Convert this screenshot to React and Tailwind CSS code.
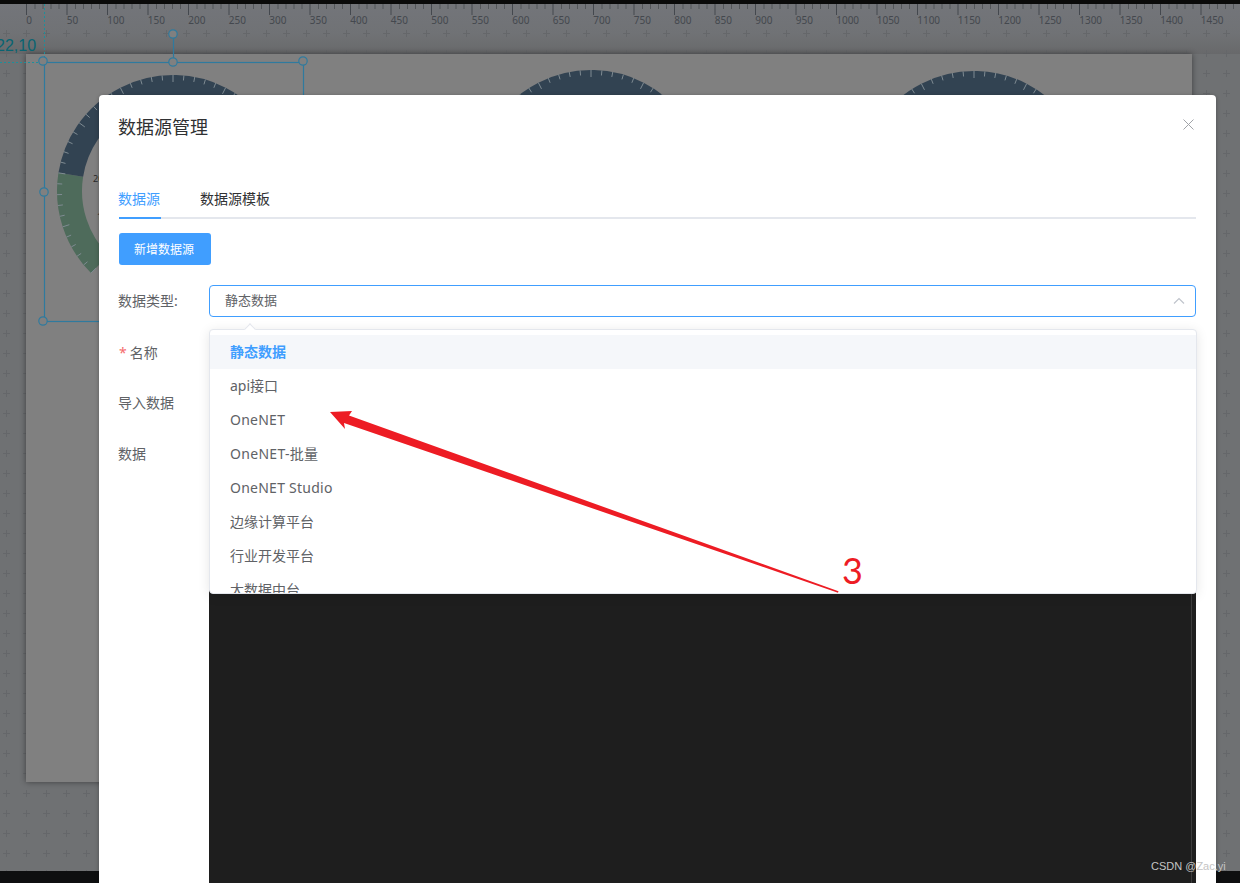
const FONT = { fontFamily: '"Noto Sans", "Noto Sans CJK SC", sans-serif' };

function polar(cx, cy, r, deg) {
  const a = (deg * Math.PI) / 180;
  return [cx + r * Math.cos(a), cy - r * Math.sin(a)];
}

function arc(cx, cy, r, from, to) {
  const [x1, y1] = polar(cx, cy, r, from);
  const [x2, y2] = polar(cx, cy, r, to);
  const large = Math.abs(from - to) > 180 ? 1 : 0;
  return `M${x1} ${y1}A${r} ${r} 0 ${large} 1 ${x2} ${y2}`;
}

function Gauge({ cx, cy }) {
  const ticks = [];
  for (let d = 225; d >= -45; d -= 5.4) ticks.push(d);
  return (
    <g fill="none">
      <path d={arc(cx, cy, 103.5, 225, 171)} stroke="#4e6b5b" strokeWidth="25" />
      <path d={arc(cx, cy, 103.5, 171, -45)} stroke="#324352" strokeWidth="25" />
      {ticks.map((d, i) => {
        const [x1, y1] = polar(cx, cy, 116, d);
        const [x2, y2] = polar(cx, cy, i % 5 === 0 ? 109 : 111, d);
        return <line key={i} x1={x1} y1={y1} x2={x2} y2={y2} stroke="#7f8b92" strokeWidth="1" />;
      })}
    </g>
  );
}

function Ruler() {
  const ticks = [];
  for (let i = 0; i <= 150; i++) {
    const x = Math.round((26.7 + i * 8.1) * 2) / 2;
    const major = i % 5 === 0;
    ticks.push(
      <line key={i} x1={x} y1="4" x2={x} y2={major ? 15 : 9} stroke={major ? "#44484e" : "#53565a"} strokeWidth="1" />
    );
    if (major && i < 150) {
      ticks.push(
        <text key={"t" + i} x={x - 0.3} y="24" fontSize="10" fill="#44484e" style={{ fontFamily: '"Noto Sans", sans-serif' }}>
          {i * 10}
        </text>
      );
    }
  }
  return <g>{ticks}</g>;
}

function Canvas() {
  const handle = "#2f7a9e";
  const circles = [
    [43, 61],
    [173, 62],
    [303, 61],
    [173, 34],
    [44, 192],
    [43, 321],
  ];
  return (
    <div className="absolute inset-0 overflow-hidden bg-[#6f7173]">
      <svg className="absolute left-0 top-0" width="1240" height="883">
        <defs>
          <pattern id="plus" x="-4" y="3" width="20" height="20" patternUnits="userSpaceOnUse">
            <path d="M7 10.5H14M10.5 7V14" stroke="#65676a" strokeWidth="1" />
          </pattern>
          <linearGradient id="top" x1="0" y1="0" x2="0" y2="1">
            <stop offset="0" stopColor="#73757a" />
            <stop offset="0.6" stopColor="#707275" />
            <stop offset="1" stopColor="#68696b" />
          </linearGradient>
        </defs>
        <rect x="0" y="4" width="1240" height="50" fill="url(#top)" />
        <rect x="0" y="30" width="1240" height="841" fill="url(#plus)" />
        <Ruler />
      </svg>
      <div className="absolute left-[26px] top-[54px] h-[728px] w-[1166px] bg-[#808080] shadow-[0_0_6px_rgba(0,0,0,0.45)]" />
      <svg className="absolute left-0 top-0" width="1240" height="883">
        <Gauge cx={173} cy={191} />
        <Gauge cx={591} cy={186} />
        <Gauge cx={974} cy={187} />
        <text x="93" y="182" fontSize="9" fill="#2a2a2a" style={{ fontFamily: '"Noto Sans", sans-serif' }}>20</text>
        <text x="97" y="220" fontSize="9" fill="#2a2a2a" style={{ fontFamily: '"Noto Sans", sans-serif' }}>10</text>
        <path d="M0 62.5H44M44.5 4V62" stroke="#1f8f9a" strokeWidth="1" strokeDasharray="2 2" fill="none" />
        <rect x="44.5" y="62.5" width="259" height="259" fill="none" stroke={handle} strokeWidth="1.2" />
        <line x1="173.5" y1="34" x2="173.5" y2="62" stroke={handle} strokeWidth="1.2" />
        {circles.map(([x, y], i) => (
          <circle key={i} cx={x} cy={y} r="4.2" fill="#808080" stroke={handle} strokeWidth="1.2" />
        ))}
        <text x="-4" y="51" fontSize="16" fill="#086472" style={{ fontFamily: '"Liberation Sans", sans-serif' }}>22,10</text>
      </svg>
    </div>
  );
}

const OPTIONS = [
  ["api接口", ""],
  ["OneNET", "tracking-[0.25px]"],
  ["OneNET-批量", "tracking-[0.3px]"],
  ["OneNET Studio", "tracking-[0.25px]"],
  ["边缘计算平台", ""],
  ["行业开发平台", ""],
  ["大数据中台", ""],
];

function Dropdown() {
  return (
    <div className="absolute left-[110px] top-[110px] z-10 w-[988px] rounded border border-[#e4e7ed] bg-white shadow-[0_2px_12px_rgba(0,0,0,0.1)]">
      <div className="absolute left-[36px] top-[-5px] h-2 w-2 rotate-45 border-l border-t border-[#e4e7ed] bg-white" />
      <div className="h-[263px] overflow-hidden rounded pt-[5px]">
        <div className="flex h-[34px] items-center bg-[#f5f7fa] px-5 text-sm font-bold text-[#409eff]">静态数据</div>
        {OPTIONS.map(([o, extra]) => (
          <div key={o} className={"flex h-[34px] shrink-0 items-center px-5 text-sm text-[#606266] " + extra}>
            {o}
          </div>
        ))}
      </div>
    </div>
  );
}

function Dialog() {
  return (
    <div
      className="absolute left-[99px] top-[95px] flex h-[788px] w-[1117px] flex-col overflow-hidden rounded-t-sm bg-white shadow-[0_1px_4px_rgba(0,0,0,0.3)]"
      style={FONT}
    >
      <div className="relative h-[88px] shrink-0 px-5 pt-[17px]">
        <div className="-ml-px text-lg leading-[30px] text-[#303133]">数据源管理</div>
        <svg className="absolute right-[22px] top-[24px]" width="11" height="11" viewBox="0 0 11 11">
          <path d="M0.5 0.5L10.5 10.5M10.5 0.5L0.5 10.5" stroke="#a0a3a8" strokeWidth="1" fill="none" />
        </svg>
      </div>
      <div className="mx-5 flex h-9 shrink-0 border-b-2 border-[#e4e7ed] text-sm leading-8 text-[#303133]">
        <div className="mb-[-2px] w-[42px] border-b-2 border-[#409eff] text-[#409eff]">
          <span className="-ml-px">数据源</span>
        </div>
        <div className="ml-[39px]">数据源模板</div>
      </div>
      <div className="relative flex flex-1 flex-col px-5 pt-[14px]">
        <button className="flex h-8 w-[92px] items-center justify-center rounded-[3px] bg-[#409eff] pt-0.5 pr-0.5 text-xs text-white">新增数据源</button>
        <div className="mt-5 flex h-8 items-center">
          <div className="-ml-px w-[91px] shrink-0 text-sm text-[#606266]">数据类型:</div>
          <div className="flex h-8 flex-1 items-center justify-between rounded-[4px] border border-[#409eff] pl-[15px] pr-[10px] text-[13px] text-[#606266]">
            <span>静态数据</span>
            <svg width="12" height="8" viewBox="0 0 12 8">
              <path d="M1 6.5L6 1.5L11 6.5" stroke="#c0c4cc" strokeWidth="1.2" fill="none" />
            </svg>
          </div>
        </div>
        <Dropdown />
        <div className="mt-5 flex h-8 items-center text-sm text-[#606266]">
          <span className="mr-[3px] text-[#f56c6c]">*</span>名称
        </div>
        <div className="-ml-px mt-[18px] flex h-8 items-center text-sm text-[#606266]">导入数据</div>
        <div className="mt-[2px] flex flex-1">
          <div className="-ml-px w-[91px] shrink-0 pt-[17px] text-sm leading-8 text-[#606266]">数据</div>
          <div className="relative flex-1 bg-[#1e1e1e]">
            <div className="absolute bottom-0 right-[4px] top-0 w-px bg-[#3c3c3c]" />
          </div>
        </div>
      </div>
    </div>
  );
}

function Annotation() {
  return (
    <>
      <svg className="pointer-events-none absolute left-0 top-0 z-20" width="1240" height="883">
        <polygon points="330,412 352,411 349,415.5 838.5,591.3 838,592.7 344,423 345,429" fill="#ed1c24" />
      </svg>
      <div className="absolute left-[842px] top-[548px] z-20 text-[36px] leading-[44px] text-[#ed1c24]" style={{ fontFamily: 'Lato, sans-serif' }}>
        3
      </div>
      <div className="absolute left-[1151px] top-[859px] z-20 text-[11px] leading-[15px] text-[#c4c4c4]" style={{ fontFamily: '"Liberation Sans", sans-serif' }}>
        CSDN @Zac.yi
      </div>
    </>
  );
}

export default function App() {
  return (
    <div className="relative h-[883px] w-[1240px] overflow-hidden bg-black">
      <Canvas />
      <div className="absolute left-0 right-0 top-0 h-1 bg-[#0a0a0a]" />
      <div className="absolute bottom-0 left-0 right-0 h-3 bg-[#0e0f10]" />
      <Dialog />
      <Annotation />
    </div>
  );
}
